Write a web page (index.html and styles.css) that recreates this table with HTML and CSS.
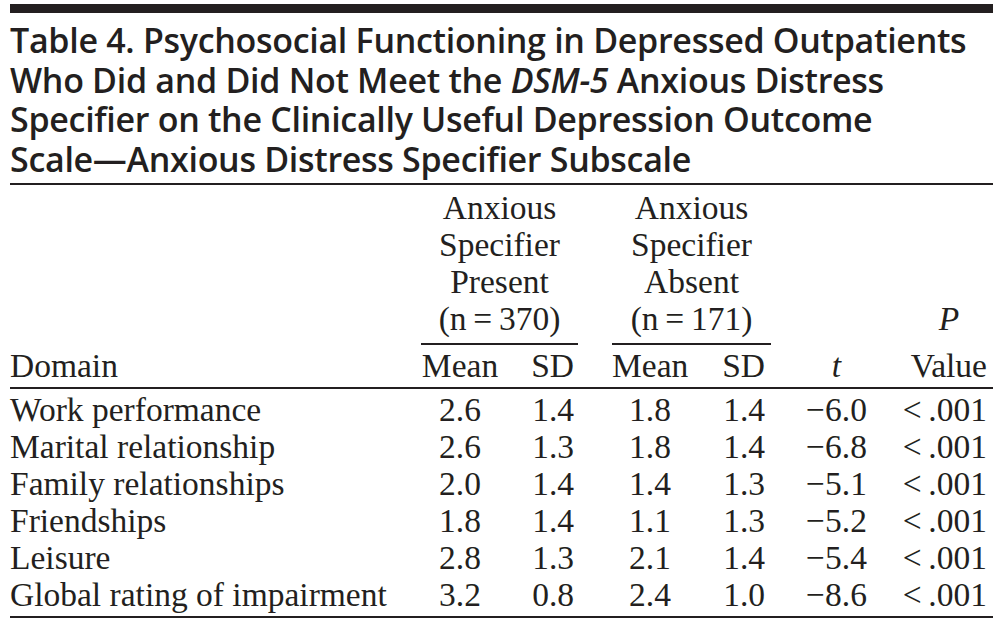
FILE: index.html
```html
<!DOCTYPE html>
<html lang="en">
<head>
<meta charset="utf-8">
<title>Table 4</title>
<link rel="stylesheet" href="styles.css">
</head>
<body>
<div class="page">
  <div class="topbar"></div>
  <h1 class="title">Table 4. Psychosocial Functioning in Depressed Outpatients<br>Who Did and Did Not Meet the <em>DSM-5</em> Anxious Distress<br>Specifier on the Clinically Useful Depression Outcome<br>Scale—Anxious Distress Specifier Subscale</h1>
  <div class="grid thead">
    <div class="group g1">Anxious<br>Specifier<br>Present<br>(n&thinsp;=&thinsp;370)</div>
    <div class="group g2">Anxious<br>Specifier<br>Absent<br>(n&thinsp;=&thinsp;171)</div>
    <div class="pv"><div class="p-label"><i>P</i></div><div>Value</div></div>
    <div class="c-domain hb">Domain</div>
    <div class="c-m1 hb">Mean</div>
    <div class="c-s1 hb">SD</div>
    <div class="c-m2 hb">Mean</div>
    <div class="c-s2 hb">SD</div>
    <div class="c-t hb"><i>t</i></div>
  </div>
  <div class="grid tbody">
    <div class="c-domain">Work performance</div><div class="c-m1">2.6</div><div class="c-s1">1.4</div><div class="c-m2">1.8</div><div class="c-s2">1.4</div><div class="c-t">−6.0</div><div class="c-p">&lt;&thinsp;.001</div>
    <div class="c-domain">Marital relationship</div><div class="c-m1">2.6</div><div class="c-s1">1.3</div><div class="c-m2">1.8</div><div class="c-s2">1.4</div><div class="c-t">−6.8</div><div class="c-p">&lt;&thinsp;.001</div>
    <div class="c-domain">Family relationships</div><div class="c-m1">2.0</div><div class="c-s1">1.4</div><div class="c-m2">1.4</div><div class="c-s2">1.3</div><div class="c-t">−5.1</div><div class="c-p">&lt;&thinsp;.001</div>
    <div class="c-domain">Friendships</div><div class="c-m1">1.8</div><div class="c-s1">1.4</div><div class="c-m2">1.1</div><div class="c-s2">1.3</div><div class="c-t">−5.2</div><div class="c-p">&lt;&thinsp;.001</div>
    <div class="c-domain">Leisure</div><div class="c-m1">2.8</div><div class="c-s1">1.3</div><div class="c-m2">2.1</div><div class="c-s2">1.4</div><div class="c-t">−5.4</div><div class="c-p">&lt;&thinsp;.001</div>
    <div class="c-domain">Global rating of impairment</div><div class="c-m1">3.2</div><div class="c-s1">0.8</div><div class="c-m2">2.4</div><div class="c-s2">1.0</div><div class="c-t">−8.6</div><div class="c-p">&lt;&thinsp;.001</div>
  </div>
</div>
</body>
</html>
```

FILE: styles.css
```css
html, body {
  margin: 0;
  padding: 0;
  background: #ffffff;
}

.page {
  width: 983px;
  margin-left: 10px;
  color: #231f20;
}

.topbar {
  margin-top: 4px;
  height: 9px;
  background: #231f20;
}

.title {
  margin: 0;
  padding-top: 8px;
  padding-bottom: 4px;
  border-bottom: 2px solid #231f20;
  font-family: "Open Sans", "Noto Sans", sans-serif;
  font-weight: 600;
  font-size: 34px;
  line-height: 39.5px;
  letter-spacing: -0.3px;
  white-space: nowrap;
}

.title em {
  font-style: italic;
}

.grid {
  display: grid;
  grid-template-columns: 411px 78px 79px 34px 76px 83px 131px 91px;
  font-family: "Liberation Serif", "Times New Roman", serif;
  font-size: 33.5px;
  line-height: 37px;
}

.thead {
  padding-top: 4px;
  padding-bottom: 3px;
  border-bottom: 2px solid #231f20;
}

.tbody {
  padding-top: 2px;
  padding-bottom: 3px;
  border-bottom: 2px solid #231f20;
}

.group {
  grid-row: 1;
  text-align: center;
  padding-bottom: 6px;
  border-bottom: 2px solid #231f20;
  margin-bottom: 2px;
}

.g1 { grid-column: 2 / 4; }
.g2 { grid-column: 5 / 7; }

.pv {
  grid-column: 8;
  grid-row: 1 / 3;
  align-self: end;
  justify-self: end;
  padding-right: 6px;
  text-align: center;
}

.p-label {
  margin-bottom: 10px;
}

.hb { grid-row: 2; }

.c-domain { grid-column: 1; text-align: left; }
.c-m1 { grid-column: 2; text-align: center; }
.c-s1 { grid-column: 3; text-align: right; padding-right: 4px; }
.c-m2 { grid-column: 5; text-align: center; }
.c-s2 { grid-column: 6; text-align: right; padding-right: 6px; }
.c-t { grid-column: 7; text-align: center; }
.c-p { grid-column: 8; text-align: right; padding-right: 6px; }
```
